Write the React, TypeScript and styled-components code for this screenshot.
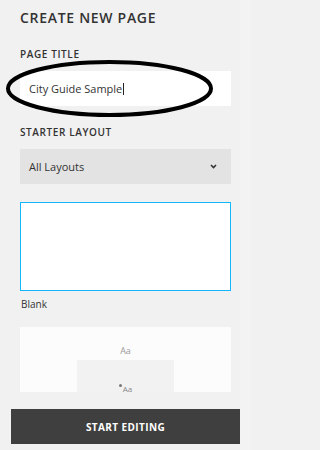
import React from "react";
import styled, { createGlobalStyle } from "styled-components";

const Global = createGlobalStyle`
  html, body { margin: 0; padding: 0; background: #f1f1f1; }
  * { box-sizing: border-box; }
`;

const Shell = styled.div`
  display: flex;
  width: 251px;
  height: 450px;
  overflow: hidden;
  background: #f1f1f1;
  font-family: "Open Sans", "Liberation Sans", sans-serif;
  color: #333;
`;

const Panel = styled.div`
  width: 240px;
  display: flex;
  flex-direction: column;
`;

const Track = styled.div`
  width: 11px;
  background: #f3f3f3;
`;

const Scroll = styled.div`
  height: 392px;
  flex-shrink: 0;
  overflow: hidden;
  padding: 10px 9px 0 20px;
  display: flex;
  flex-direction: column;
  & > * { flex-shrink: 0; }
`;

const Heading = styled.h1`
  margin: 0;
  font-size: 14px;
  line-height: 16px;
  font-weight: 600;
  letter-spacing: 0.7px;
  color: #333;
`;

const Label = styled.div<{ $top: number }>`
  margin-top: ${(p) => p.$top}px;
  font-size: 10px;
  line-height: 12px;
  font-weight: 600;
  letter-spacing: 0.6px;
  color: #333;
`;

const Field = styled.div`
  position: relative;
  margin-top: 11.5px;
  height: 35px;
  background: #fff;
  display: flex;
  align-items: center;
  padding-left: 9px;
  font-size: 11px;
`;

const Caret = styled.span`
  display: inline-block;
  width: 1px;
  height: 12px;
  background: #222;
  margin-left: 1px;
`;

const Ring = styled.svg`
  position: absolute;
  left: -14px;
  top: -11px;
  width: 207px;
  height: 57px;
  overflow: visible;
  pointer-events: none;
`;

const Select = styled.div`
  margin-top: 11.5px;
  height: 35px;
  background: #e3e3e3;
  display: flex;
  align-items: center;
  justify-content: space-between;
  padding: 0 14px 0 9px;
  font-size: 11px;
`;

const BlankCard = styled.div`
  margin-top: 18px;
  height: 89px;
  background: #fff;
  border: 1px solid #14b6ff;
`;

const Caption = styled.div`
  margin-top: 6px;
  font-size: 10px;
  line-height: 14px;
  padding-left: 1px;
  color: #333;
`;

const Preview = styled.div`
  margin-top: 16px;
  height: 120px;
  background: #fcfcfc;
  display: flex;
  flex-direction: column;
  align-items: center;
`;

const PreviewText = styled.div`
  margin-top: 18px;
  font-size: 9px;
  line-height: 12px;
  color: #9a9a9a;
`;

const PreviewBlock = styled.div`
  margin-top: 3px;
  width: 97px;
  height: 80px;
  background: #f2f2f2;
  display: flex;
  justify-content: center;
  padding-top: 24px;
  gap: 1px;
  font-size: 8px;
  line-height: 10px;
  color: #888;
`;

const Dot = styled.span`
  width: 3px;
  height: 3px;
  border-radius: 50%;
  background: #777;
`;

const Footer = styled.div`
  padding: 17px 0 0 11px;
`;

const Button = styled.button`
  width: 229px;
  height: 35px;
  border: none;
  background: #3f3f3f;
  color: #fff;
  font-family: "Open Sans", "Liberation Sans", sans-serif;
  font-weight: 700;
  font-size: 10px;
  letter-spacing: 0.4px;
  padding: 0;
`;

export default function App() {
  return (
    <>
      <Global />
      <Shell>
        <Panel>
          <Scroll>
            <Heading>CREATE NEW PAGE</Heading>
            <Label $top={21.5}>PAGE TITLE</Label>
            <Field>
              City Guide Sample
              <Caret />
              <Ring viewBox="0 0 207 57">
                <ellipse cx="103.5" cy="28.5" rx="101.5" ry="26.5" fill="none" stroke="#000" strokeWidth="4" />
              </Ring>
            </Field>
            <Label $top={19.5}>STARTER LAYOUT</Label>
            <Select>
              <span>All Layouts</span>
              <svg width="7" height="5" viewBox="0 0 7 5">
                <path d="M1 1 L3.5 3.5 L6 1" fill="none" stroke="#333" strokeWidth="1.6" />
              </svg>
            </Select>
            <BlankCard />
            <Caption>Blank</Caption>
            <Preview>
              <PreviewText>Aa</PreviewText>
              <PreviewBlock>
                <Dot />
                <span>Aa</span>
              </PreviewBlock>
            </Preview>
          </Scroll>
          <Footer>
            <Button>START EDITING</Button>
          </Footer>
        </Panel>
        <Track />
      </Shell>
    </>
  );
}
